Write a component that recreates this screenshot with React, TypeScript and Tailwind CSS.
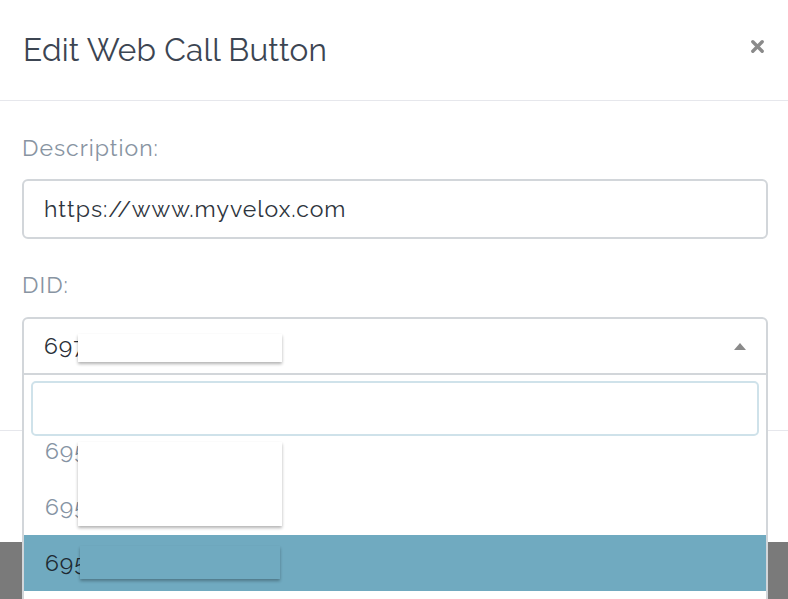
import { ReactNode } from "react";

const font = { fontFamily: "Raleway, Lato, 'Open Sans', sans-serif" };

function Redact({ className }: { className: string }) {
  return <div className={`absolute shadow-[0_2px_3px_rgba(0,0,0,0.3)] ${className}`} />;
}

function Option({ children, active = false }: { children: ReactNode; active?: boolean }) {
  return (
    <div
      className={`h-[56px] flex items-center pl-[21px] text-[23px] tracking-[1px] ${
        active ? "bg-[#70aac0] text-[#1e2a33]" : "text-[#8593a3]"
      }`}
    >
      {children}
    </div>
  );
}

export default function App() {
  return (
    <div className="relative w-[788px] h-[599px] overflow-hidden bg-[linear-gradient(#3f3f3f_0px,#6e6e6e_30px,#7d7d7d_42px,#7a7a7a_57px)]" style={font}>
      <div className="h-[542px] bg-white flex flex-col">
        {/* header */}
        <div className="h-[101px] border-b border-[#e6e7ec] flex items-center justify-between pl-[23px] pr-[23px]">
          <h1 className="text-[31.5px] tracking-[0.2px] text-[#3c4552]">Edit Web Call Button</h1>
          <svg className="w-[15px] h-[15px] mb-[8px] text-[#8a8a8a]" viewBox="0 0 16 16" fill="none" stroke="currentColor" strokeWidth={3.6} strokeLinecap="round">
            <path d="M3 3l10 10M13 3L3 13" />
          </svg>
        </div>

        {/* body */}
        <div className="h-[329px] pl-[22px] pr-[20px] pt-[32px]">
          <label className="block text-[23px] tracking-[1px] leading-[30px] text-[#8894a2]">Description:</label>
          <div className="mt-[16px] h-[60px] border-2 border-[#d2d6da] rounded-[6px] flex items-center pl-[20px] text-[23px] tracking-[1px] text-[#2e353d]">
            https://www.myvelox.com
          </div>
          <label className="block mt-[31px] text-[23px] tracking-[1px] leading-[30px] text-[#8894a2]">DID:</label>

          <div className="relative mt-[17px] z-10">
            <div className="h-[58px] border-2 border-[#d2d6da] rounded-t-[6px] flex items-center justify-between pl-[20px] pr-[20px] text-[23px] tracking-[1px] text-[#2a3038] bg-white">
              <span>697</span>
              <svg className="w-[12px] h-[7px] text-[#8a8a8a]" viewBox="0 0 12 7" fill="currentColor">
                <path d="M6 0l6 7H0z" />
              </svg>
            </div>
            <Redact className="left-[56px] top-[17px] w-[204px] h-[28px] bg-white" />

            {/* dropdown */}
            <div className="absolute left-0 right-0 top-[56px] h-[240px] bg-white border-x-2 border-t-2 border-[#d2d6da]">
              <div className="px-[7px] pt-[6px] pb-[4px]">
                <div className="h-[55px] border-2 border-[#cfe2ea] rounded-[5px]" />
              </div>
              <div className="relative h-[180px] overflow-hidden">
                <div className="-mt-[17px]">
                  <Option>695</Option>
                  <Option>695</Option>
                  <Option active>695</Option>
                </div>
                <Redact className="left-[54px] top-[2px] w-[204px] h-[84px] bg-white" />
                <Redact className="left-[56px] top-[106px] w-[200px] h-[33px] bg-[#70aac0]" />
              </div>
            </div>
          </div>
        </div>

        {/* footer */}
        <div className="flex-1 border-t border-[#e6e7ec]" />
      </div>
    </div>
  );
}
